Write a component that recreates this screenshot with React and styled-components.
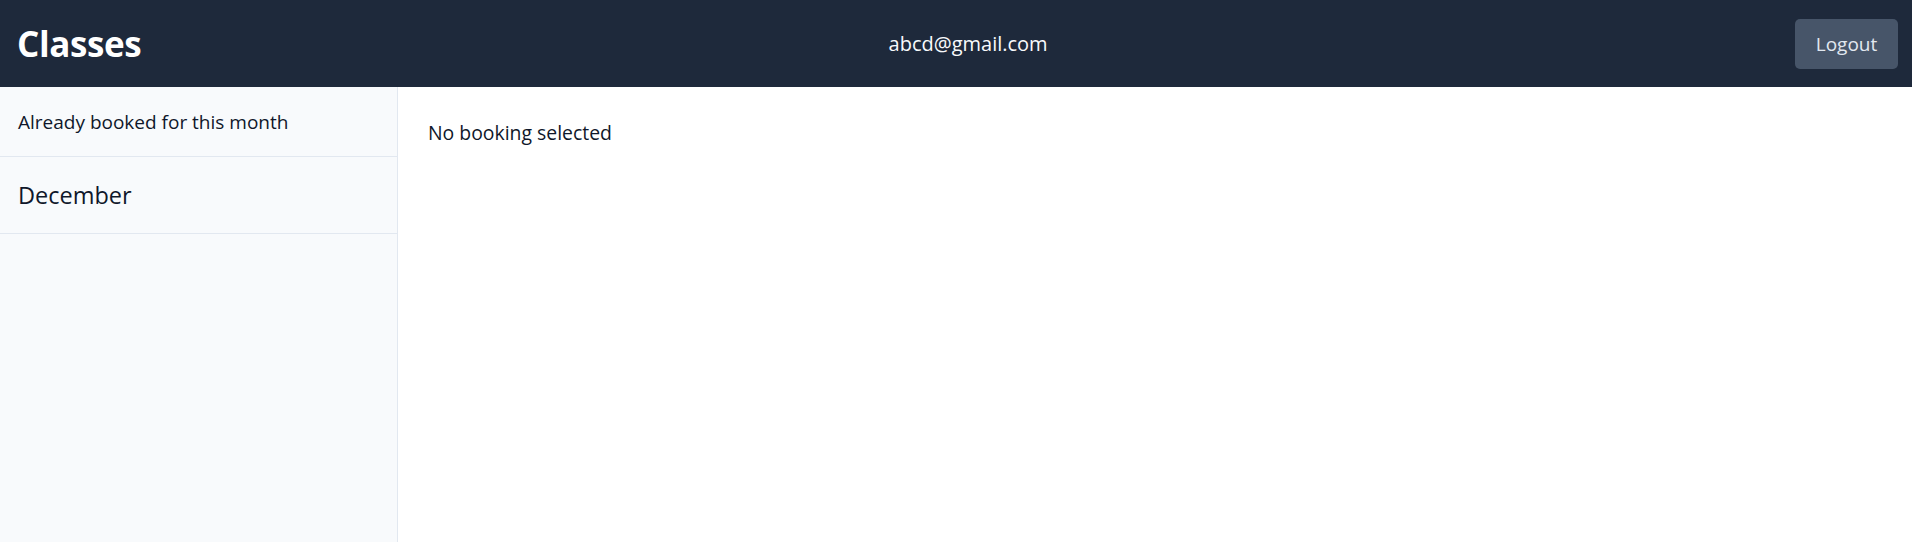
import React from "react";
import styled, { createGlobalStyle } from "styled-components";

const Global = createGlobalStyle`
  html, body {
    margin: 0;
    padding: 0;
    height: 100%;
  }
  body {
    font-family: "Open Sans", "Noto Sans", sans-serif;
    color: #111827;
    background: #fff;
  }
  #root {
    height: 100%;
  }
`;

const Shell = styled.div`
  display: flex;
  flex-direction: column;
  height: 100vh;
`;

const Header = styled.header`
  height: 87px;
  flex-shrink: 0;
  display: flex;
  align-items: center;
  justify-content: space-between;
  padding: 0 14px 0 17px;
  background: #1e293b;
  color: #fff;
`;

const Title = styled.h1`
  margin: 0;
  font-size: 35px;
  font-weight: 700;
  letter-spacing: -0.4px;
`;

const Email = styled.span`
  font-size: 20px;
  color: #f8fafc;
`;

const LogoutBtn = styled.button`
  width: 103px;
  height: 50px;
  border: none;
  border-radius: 5px;
  background: #475569;
  color: #e2e8f0;
  font-family: inherit;
  font-size: 19px;
  cursor: pointer;
  &:hover {
    background: #64748b;
  }
`;

const Body = styled.div`
  flex: 1;
  display: flex;
  min-height: 0;
`;

const Sidebar = styled.aside`
  width: 397px;
  flex-shrink: 0;
  background: #f8fafc;
  border-right: 1px solid #e2e8f0;
`;

const SideRow = styled.div`
  display: flex;
  align-items: center;
  height: ${(p) => p.h}px;
  padding: 0 18px;
  border-bottom: 1px solid #e2e8f0;
  font-size: ${(p) => p.size}px;
  color: #0f172a;
`;

const Main = styled.main`
  flex: 1;
  padding: 32px 30px;
  font-size: 19.4px;
  color: #0f172a;
`;

export default function App() {
  return (
    <Shell>
      <Global />
      <Header>
        <Title>Classes</Title>
        <Email>abcd@gmail.com</Email>
        <LogoutBtn>Logout</LogoutBtn>
      </Header>
      <Body>
        <Sidebar>
          <SideRow h={69} size={19}>
            Already booked for this month
          </SideRow>
          <SideRow h={76} size={23.5}>
            December
          </SideRow>
        </Sidebar>
        <Main>No booking selected</Main>
      </Body>
    </Shell>
  );
}
